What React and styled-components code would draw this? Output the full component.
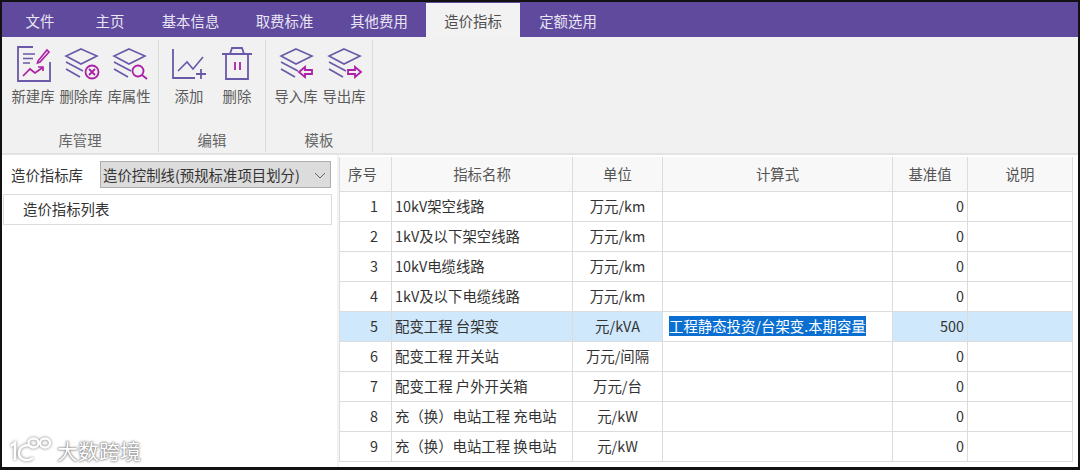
import React from 'react';
import styled, { createGlobalStyle } from 'styled-components';

const GlobalStyle = createGlobalStyle`
  html, body {
    margin: 0;
    padding: 0;
    background: #fff;
    font-family: "Noto Sans CJK SC", "Noto Sans", sans-serif;
  }
`;

const Frame = styled.div`
  width: 1080px;
  height: 470px;
  box-sizing: border-box;
  border: solid #111;
  border-width: 2px 2px 3px 2px;
  background: #fff;
  overflow: hidden;
  position: relative;
  display: flex;
  flex-direction: column;
`;

const TabBar = styled.div`
  display: flex;
  height: 35px;
  padding-left: 2px;
  padding-top: 1px;
  box-sizing: border-box;
  background: #5f4a9e;
  flex: none;
`;

const Tab = styled.div`
  width: ${({ $width }) => $width}px;
  display: flex;
  align-items: center;
  justify-content: center;
  font-size: 14.4px;
  color: ${({ $active }) => ($active ? '#4f4f4f' : '#e9e5f3')};
  background: ${({ $active }) => ($active ? '#f2f2f2' : 'transparent')};
`;

const Ribbon = styled.div`
  display: flex;
  height: 118px;
  flex: none;
  padding-top: 3px;
  box-sizing: border-box;
  background: #f1f1f1;
  border-bottom: 2px solid #e3e3e3;
`;

const Group = styled.div`
  width: ${({ $width }) => $width}px;
  box-sizing: border-box;
  padding-left: ${({ $left }) => $left}px;
  margin-bottom: 1px;
  border-right: 1px solid #dcdcdc;
  display: flex;
  flex-direction: column;
`;

const Buttons = styled.div`
  display: flex;
  height: 90px;
`;

const ToolButton = styled.div`
  width: 48px;
  display: flex;
  flex-direction: column;
  align-items: center;
  padding-top: 3px;
  box-sizing: border-box;
`;

const ToolLabel = styled.div`
  font-size: 14.4px;
  line-height: 20px;
  margin-top: 3px;
  color: #5b5b5b;
  white-space: nowrap;
`;

const GroupLabel = styled.div`
  text-align: center;
  font-size: 14.4px;
  line-height: 20px;
  color: #666;
  margin-left: ${({ $left }) => -$left}px;
`;

const Body = styled.div`
  flex: 1;
  display: flex;
  min-height: 0;
`;

const Side = styled.div`
  width: 337px;
  flex: none;
  padding: 6px 2px 0 1px;
  box-sizing: border-box;
  border-right: 2px solid #f3f3f3;
`;

const LibraryRow = styled.div`
  display: flex;
  align-items: center;
  height: 27px;
`;

const LibraryLabel = styled.div`
  width: 97px;
  padding-left: 8px;
  box-sizing: border-box;
  font-size: 14.4px;
  color: #333;
`;

const LibrarySelect = styled.div`
  width: 231px;
  height: 27px;
  box-sizing: border-box;
  display: flex;
  align-items: center;
  justify-content: space-between;
  padding: 0 3px 0 2px;
  background: #dcdcdc;
  border: 1px solid #adadad;
  font-size: 14.4px;
  color: #333;
  white-space: nowrap;
`;

const TreeBox = styled.div`
  margin-top: 6px;
  height: 31px;
  width: 329px;
  box-sizing: border-box;
  border: 1px solid #dcdcdc;
  display: flex;
  align-items: center;
  padding: 0 0 2px 19px;
  font-size: 14.4px;
  color: #333;
`;

const TablePane = styled.div`
  flex: 1;
  padding-top: 2px;
  min-width: 0;
`;

const Grid = styled.table`
  border-collapse: separate;
  border-spacing: 0;
  table-layout: fixed;
  width: 734px;
  border-left: 1px solid #dcdcdc;
  font-size: 14.4px;
  color: #333;
`;

const HeadCell = styled.th`
  height: 35px;
  padding: 0 0 2px;
  box-sizing: border-box;
  background: #f8f8f8;
  font-weight: 400;
  color: #555;
  text-align: center;
  border-right: 1px solid #dcdcdc;
  border-bottom: 1px solid #dcdcdc;

  &:first-child {
    padding-right: 6px;
  }
`;

const Cell = styled.td`
  height: 30px;
  padding: ${({ $align }) => ($align === 'right' ? '0 3px 2px 0' : $align === 'left' ? '0 0 2px 3px' : '0 0 2px')};
  box-sizing: border-box;
  text-align: ${({ $align }) => $align || 'center'};
  background: ${({ $selected }) => ($selected ? '#d0e8fb' : '#fff')};
  border-right: 1px solid #dcdcdc;
  border-bottom: 1px solid #dcdcdc;
  white-space: nowrap;
  overflow: hidden;
`;

const IndexCell = styled(Cell)`
  padding: 0 13px 2px 0;
  text-align: right;
`;

const EditCell = styled.td`
  height: 30px;
  padding: 0 0 2px 6px;
  box-sizing: border-box;
  background: #fff;
  border-right: 1px solid #dcdcdc;
  border-bottom: 1px solid #dcdcdc;
  white-space: nowrap;
`;

const SelectedText = styled.span`
  background: #0a6fd1;
  color: #fff;
  line-height: 20px;
  display: inline-block;
`;

const Watermark = styled.div`
  position: absolute;
  left: 7px;
  bottom: 3px;
  display: flex;
  align-items: center;
  gap: 4px;
  color: #fff;
  font-size: 21px;
  line-height: 28px;
  text-shadow: 0 0 2px #777, 0 0 3px #999, 0 0 1px #999;
`;

const MarkLogo = styled.svg`
  filter: drop-shadow(0 0 1.5px #777);
`;

const PURPLE = '#6a58a8';
const MAGENTA = '#ad1fa6';

const Stack = () => (
    <g fill="none" stroke={PURPLE} strokeWidth="1.6">
        <path d="M20 6 36 13 20 21 5 13Z" />
        <path d="M5 19 22 28M5 26 19 34" />
    </g>
);

const IconNew = () => (
    <svg width="40" height="40" viewBox="0 0 40 40" fill="none">
        <path d="M20 4H5V38H37V19" stroke={PURPLE} strokeWidth="1.8" />
        <path d="M10 11H22M10 15.500H20M10 20H17" stroke={PURPLE} strokeWidth="1.6" />
        <path d="M25 18 34 7 36 9 27 19 24.500 20Z" stroke={MAGENTA} strokeWidth="1.6" />
        <path d="M10 33 17 26 22 30 29 25M25 24H30V28" stroke={MAGENTA} strokeWidth="1.7" />
    </svg>
);

const IconDelete = () => (
    <svg width="40" height="40" viewBox="0 0 40 40" fill="none">
        <Stack />
        <circle cx="31" cy="29" r="6.500" stroke={MAGENTA} strokeWidth="1.8" />
        <path d="M28 26 34 32M34 26 28 32" stroke={MAGENTA} strokeWidth="1.8" />
    </svg>
);

const IconSearch = () => (
    <svg width="40" height="40" viewBox="0 0 40 40" fill="none">
        <Stack />
        <circle cx="29" cy="28" r="5.500" stroke={MAGENTA} strokeWidth="1.8" />
        <path d="M33 32 38 36" stroke={MAGENTA} strokeWidth="1.8" />
    </svg>
);

const IconChart = () => (
    <svg width="40" height="40" viewBox="0 0 40 40" fill="none">
        <path d="M4 6V35H26" stroke={PURPLE} strokeWidth="1.8" />
        <path d="M9 28 18 19 24 26 34 14" stroke={PURPLE} strokeWidth="1.6" />
        <path d="M32 26V36M27 31H37" stroke={PURPLE} strokeWidth="1.8" />
    </svg>
);

const IconTrash = () => (
    <svg width="40" height="40" viewBox="0 0 40 40" fill="none">
        <path d="M5 11H35M13 11 15 5H25L27 11" stroke={PURPLE} strokeWidth="1.8" />
        <path d="M9 11V36H31V11" stroke={PURPLE} strokeWidth="1.8" />
        <path d="M18 19V27M23 19V27" stroke={MAGENTA} strokeWidth="1.8" />
    </svg>
);

const IconImport = () => (
    <svg width="40" height="40" viewBox="0 0 40 40" fill="none">
        <Stack />
        <path d="M23 29 29 24V27H36V31H29V34Z" stroke={MAGENTA} strokeWidth="1.8" />
    </svg>
);

const IconExport = () => (
    <svg width="40" height="40" viewBox="0 0 40 40" fill="none">
        <Stack />
        <path d="M37 29 31 24V27H24V31H31V34Z" stroke={MAGENTA} strokeWidth="1.8" />
    </svg>
);

const Chevron = () => (
    <svg width="14" height="14" viewBox="0 0 14 14" fill="none">
        <path d="M2 5 7 10 12 5" stroke="#666" strokeWidth="1" />
    </svg>
);

const tabs = [
    { label: '文件', width: 72 },
    { label: '主页', width: 68 },
    { label: '基本信息', width: 93 },
    { label: '取费标准', width: 95 },
    { label: '其他费用', width: 94 },
    { label: '造价指标', width: 94, active: true },
    { label: '定额选用', width: 96 },
];

const groups = [
    {
        name: '库管理',
        width: 157,
        left: 7,
        tools: [
            { label: '新建库', Icon: IconNew },
            { label: '删除库', Icon: IconDelete },
            { label: '库属性', Icon: IconSearch },
        ],
    },
    {
        name: '编辑',
        width: 107,
        left: 6,
        tools: [
            { label: '添加', Icon: IconChart },
            { label: '删除', Icon: IconTrash },
        ],
    },
    {
        name: '模板',
        width: 107,
        left: 6,
        tools: [
            { label: '导入库', Icon: IconImport },
            { label: '导出库', Icon: IconExport },
        ],
    },
];

const columns = [52, 181, 90, 230, 75, 105];
const headers = ['序号', '指标名称', '单位', '计算式', '基准值', '说明'];

const rows = [
    { name: '10kV架空线路', unit: '万元/km', base: 0 },
    { name: '1kV及以下架空线路', unit: '万元/km', base: 0 },
    { name: '10kV电缆线路', unit: '万元/km', base: 0 },
    { name: '1kV及以下电缆线路', unit: '万元/km', base: 0 },
    { name: '配变工程 台架变', unit: '元/kVA', base: 500, formula: '工程静态投资/台架变.本期容量' },
    { name: '配变工程 开关站', unit: '万元/间隔', base: 0 },
    { name: '配变工程 户外开关箱', unit: '万元/台', base: 0 },
    { name: '充（换）电站工程 充电站', unit: '元/kW', base: 0 },
    { name: '充（换）电站工程 换电站', unit: '元/kW', base: 0 },
];

const App = () => (
    <Frame>
        <GlobalStyle />
        <TabBar>
            {tabs.map((tab) => (
                <Tab key={tab.label} $width={tab.width} $active={tab.active}>
                    {tab.label}
                </Tab>
            ))}
        </TabBar>
        <Ribbon>
            {groups.map((group) => (
                <Group key={group.name} $width={group.width} $left={group.left}>
                    <Buttons>
                        {group.tools.map(({ label, Icon }) => (
                            <ToolButton key={label}>
                                <Icon />
                                <ToolLabel>{label}</ToolLabel>
                            </ToolButton>
                        ))}
                    </Buttons>
                    <GroupLabel $left={group.left}>{group.name}</GroupLabel>
                </Group>
            ))}
        </Ribbon>
        <Body>
            <Side>
                <LibraryRow>
                    <LibraryLabel>造价指标库</LibraryLabel>
                    <LibrarySelect>
                        造价控制线(预规标准项目划分)
                        <Chevron />
                    </LibrarySelect>
                </LibraryRow>
                <TreeBox>造价指标列表</TreeBox>
            </Side>
            <TablePane>
                <Grid>
                    <colgroup>
                        {columns.map((width, index) => (
                            <col key={index} width={width} />
                        ))}
                    </colgroup>
                    <thead>
                        <tr>
                            {headers.map((header) => (
                                <HeadCell key={header}>{header}</HeadCell>
                            ))}
                        </tr>
                    </thead>
                    <tbody>
                        {rows.map((row, index) => (
                            <tr key={row.name}>
                                <IndexCell $selected={!!row.formula}>{index + 1}</IndexCell>
                                <Cell $align="left" $selected={!!row.formula}>{row.name}</Cell>
                                <Cell $selected={!!row.formula}>{row.unit}</Cell>
                                <EditCell>
                                    {row.formula && <SelectedText>{row.formula}</SelectedText>}
                                </EditCell>
                                <Cell $align="right" $selected={!!row.formula}>{row.base}</Cell>
                                <Cell $selected={!!row.formula} />
                            </tr>
                        ))}
                    </tbody>
                </Grid>
            </TablePane>
        </Body>
        <Watermark>
            <MarkLogo width="44" height="26" viewBox="0 0 44 26" fill="none" stroke="#fff" strokeWidth="2.4">
                <path d="M2 9 6 6V23M23 10C17 6 10 10 10 16 10 23 18 25 24 21" />
                <ellipse cx="24.500" cy="6" rx="5" ry="4.500" />
                <ellipse cx="36" cy="6" rx="5" ry="4.500" />
            </MarkLogo>
            大数跨境
        </Watermark>
    </Frame>
);

export default App;
